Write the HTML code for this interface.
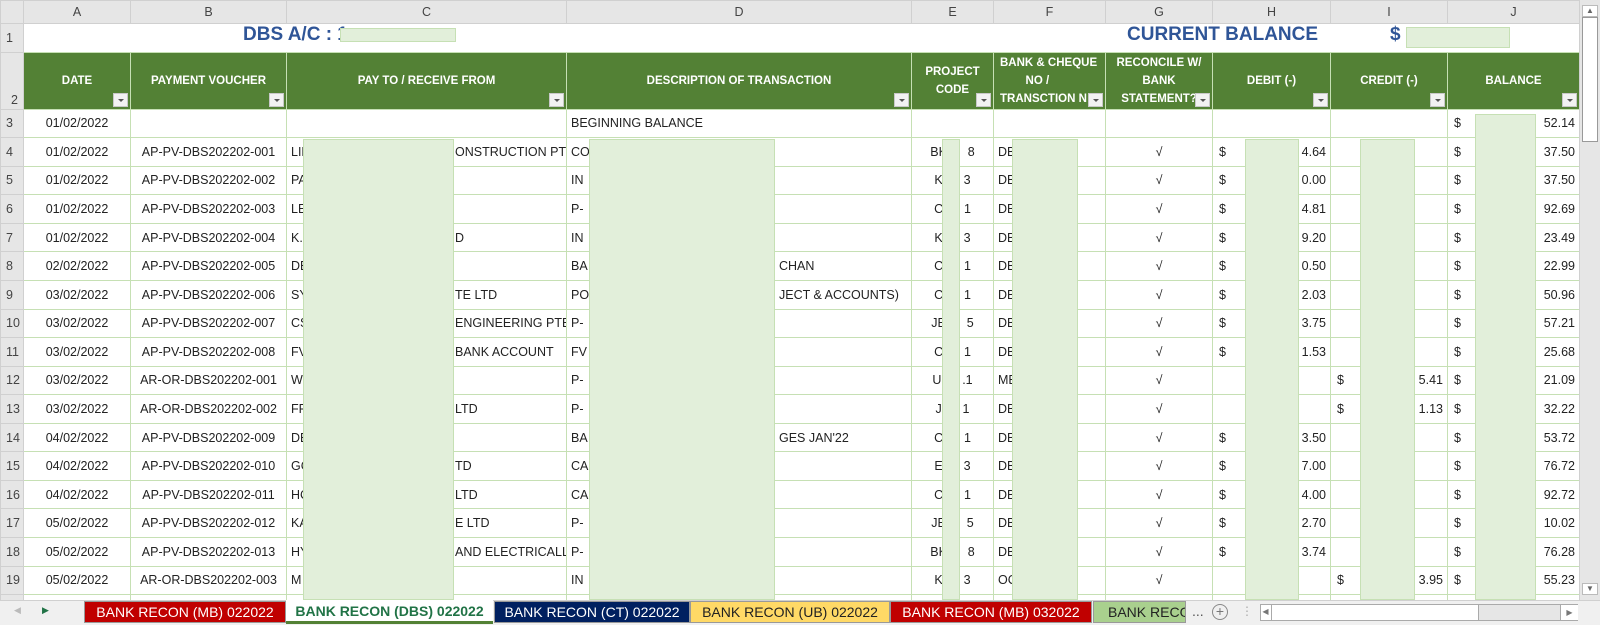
<!DOCTYPE html>
<html><head><meta charset="utf-8">
<style>
*{margin:0;padding:0;box-sizing:border-box}
body{width:1600px;height:625px;overflow:hidden;background:#fff;font-family:"Liberation Sans",sans-serif;position:relative}
table{position:absolute;left:0;top:0;border-collapse:collapse;table-layout:fixed}
td{border:1px solid #c6e0b4;font-size:12.5px;color:#222;white-space:nowrap;overflow:hidden;padding:0 4px;height:28.57px;vertical-align:middle;position:relative}
tr.cl td{background:#e6e6e6;border:1px solid #d0d0d0;color:#444;text-align:center;height:23px;font-size:12.5px}
td.rh{background:#e6e6e6;border:1px solid #d0d0d0;color:#444;padding:0 0 0 5px;text-align:left}
tr.hd td{background:#538135;color:#fff;font-weight:bold;font-size:11.5px;text-align:center;height:57px;line-height:18px;border:1px solid #c6e0b4}
tr.hd td.rh{background:#e6e6e6;color:#444;font-weight:normal;vertical-align:bottom;font-size:12.5px;border:1px solid #d0d0d0}
.fb{position:absolute;right:2px;bottom:2px;width:15px;height:14px;background:#f2f2f2;border:1px solid #c8c8c8}
.fb:after{content:"";position:absolute;left:4px;top:5px;border-left:3px solid transparent;border-right:3px solid transparent;border-top:3px solid #555}
.c{text-align:center}
.r{text-align:right}
.d{position:absolute;left:6px;top:50%;transform:translateY(-50%)}
.x{position:absolute;top:50%;transform:translateY(-50%)}
.red{position:absolute;background:#e2efda;border:1px solid #c6e0b4}
</style></head><body>
<table>
<colgroup><col style="width:23px"><col style="width:107px"><col style="width:156px"><col style="width:280px"><col style="width:345px"><col style="width:82px"><col style="width:112px"><col style="width:107px"><col style="width:118px"><col style="width:117px"><col style="width:132px"></colgroup>
<tr class="cl"><td style="background:#e6e6e6"></td><td>A</td><td>B</td><td>C</td><td>D</td><td>E</td><td>F</td><td>G</td><td>H</td><td>I</td><td>J</td></tr>
<tr style="height:28px"><td class="rh">1</td><td colspan="10" style="border:none;border-bottom:1px solid #c6e0b4;height:28px"></td></tr>
<tr class="hd"><td class="rh">2</td>
<td>DATE<div class="fb"></div></td>
<td>PAYMENT VOUCHER<div class="fb"></div></td>
<td>PAY TO / RECEIVE FROM<div class="fb"></div></td>
<td>DESCRIPTION OF TRANSACTION<div class="fb"></div></td>
<td>PROJECT<br>CODE<div class="fb"></div></td>
<td style="vertical-align:top;padding-top:1px;text-align:left;padding-left:6px">BANK &amp; CHEQUE<br>&nbsp;&nbsp;&nbsp;&nbsp;&nbsp;&nbsp;&nbsp;&nbsp;NO /<br>TRANSCTION N<div class="fb"></div></td>
<td style="vertical-align:top;padding-top:1px">RECONCILE W/<br>BANK<br>STATEMENT?<div class="fb"></div></td>
<td>DEBIT (-)<div class="fb"></div></td>
<td>CREDIT (-)<div class="fb"></div></td>
<td>BALANCE<div class="fb"></div></td></tr>
<tr><td class="rh">3</td><td class="c">01/02/2022</td><td></td><td></td><td>BEGINNING BALANCE</td><td></td><td></td><td></td><td></td><td></td><td class="r"><span class="d">$</span>52.14</td></tr>
<tr><td class="rh">4</td><td class="c">01/02/2022</td><td class="c">AP-PV-DBS202202-001</td><td>LIN<span class="x" style="left:168px">ONSTRUCTION PTE L</span></td><td>CO</td><td class="c">BK&nbsp;&nbsp;&nbsp;&nbsp;&nbsp;&nbsp;8</td><td>DB</td><td class="c">√</td><td class="r"><span class="d">$</span>4.64</td><td></td><td class="r"><span class="d">$</span>37.50</td></tr>
<tr><td class="rh">5</td><td class="c">01/02/2022</td><td class="c">AP-PV-DBS202202-002</td><td>PA</td><td>IN</td><td class="c">K&nbsp;&nbsp;&nbsp;&nbsp;&nbsp;&nbsp;3</td><td>DB</td><td class="c">√</td><td class="r"><span class="d">$</span>0.00</td><td></td><td class="r"><span class="d">$</span>37.50</td></tr>
<tr><td class="rh">6</td><td class="c">01/02/2022</td><td class="c">AP-PV-DBS202202-003</td><td>LE</td><td>P-</td><td class="c">C&nbsp;&nbsp;&nbsp;&nbsp;&nbsp;&nbsp;1</td><td>DB</td><td class="c">√</td><td class="r"><span class="d">$</span>4.81</td><td></td><td class="r"><span class="d">$</span>92.69</td></tr>
<tr><td class="rh">7</td><td class="c">01/02/2022</td><td class="c">AP-PV-DBS202202-004</td><td>K.I<span class="x" style="left:168px">D</span></td><td>IN</td><td class="c">K&nbsp;&nbsp;&nbsp;&nbsp;&nbsp;&nbsp;3</td><td>DB</td><td class="c">√</td><td class="r"><span class="d">$</span>9.20</td><td></td><td class="r"><span class="d">$</span>23.49</td></tr>
<tr><td class="rh">8</td><td class="c">02/02/2022</td><td class="c">AP-PV-DBS202202-005</td><td>DE</td><td>BA<span class="x" style="left:212px">CHAN</span></td><td class="c">C&nbsp;&nbsp;&nbsp;&nbsp;&nbsp;&nbsp;1</td><td>DB</td><td class="c">√</td><td class="r"><span class="d">$</span>0.50</td><td></td><td class="r"><span class="d">$</span>22.99</td></tr>
<tr><td class="rh">9</td><td class="c">03/02/2022</td><td class="c">AP-PV-DBS202202-006</td><td>SY<span class="x" style="left:168px">TE LTD</span></td><td>PO<span class="x" style="left:212px">JECT &amp; ACCOUNTS)</span></td><td class="c">C&nbsp;&nbsp;&nbsp;&nbsp;&nbsp;&nbsp;1</td><td>DB</td><td class="c">√</td><td class="r"><span class="d">$</span>2.03</td><td></td><td class="r"><span class="d">$</span>50.96</td></tr>
<tr><td class="rh">10</td><td class="c">03/02/2022</td><td class="c">AP-PV-DBS202202-007</td><td>CS<span class="x" style="left:168px">ENGINEERING PTE L</span></td><td>P-</td><td class="c">JE&nbsp;&nbsp;&nbsp;&nbsp;&nbsp;&nbsp;5</td><td>DB</td><td class="c">√</td><td class="r"><span class="d">$</span>3.75</td><td></td><td class="r"><span class="d">$</span>57.21</td></tr>
<tr><td class="rh">11</td><td class="c">03/02/2022</td><td class="c">AP-PV-DBS202202-008</td><td>FV<span class="x" style="left:168px">BANK ACCOUNT</span></td><td>FV</td><td class="c">C&nbsp;&nbsp;&nbsp;&nbsp;&nbsp;&nbsp;1</td><td>DB</td><td class="c">√</td><td class="r"><span class="d">$</span>1.53</td><td></td><td class="r"><span class="d">$</span>25.68</td></tr>
<tr><td class="rh">12</td><td class="c">03/02/2022</td><td class="c">AR-OR-DBS202202-001</td><td>W</td><td>P-</td><td class="c">U&nbsp;&nbsp;&nbsp;&nbsp;&nbsp;&nbsp;.1</td><td>ME</td><td class="c">√</td><td></td><td class="r"><span class="d">$</span>5.41</td><td class="r"><span class="d">$</span>21.09</td></tr>
<tr><td class="rh">13</td><td class="c">03/02/2022</td><td class="c">AR-OR-DBS202202-002</td><td>FR<span class="x" style="left:168px">LTD</span></td><td>P-</td><td class="c">J&nbsp;&nbsp;&nbsp;&nbsp;&nbsp;&nbsp;1</td><td>DB</td><td class="c">√</td><td></td><td class="r"><span class="d">$</span>1.13</td><td class="r"><span class="d">$</span>32.22</td></tr>
<tr><td class="rh">14</td><td class="c">04/02/2022</td><td class="c">AP-PV-DBS202202-009</td><td>DE</td><td>BA<span class="x" style="left:212px">GES JAN'22</span></td><td class="c">C&nbsp;&nbsp;&nbsp;&nbsp;&nbsp;&nbsp;1</td><td>DB</td><td class="c">√</td><td class="r"><span class="d">$</span>3.50</td><td></td><td class="r"><span class="d">$</span>53.72</td></tr>
<tr><td class="rh">15</td><td class="c">04/02/2022</td><td class="c">AP-PV-DBS202202-010</td><td>GC<span class="x" style="left:168px">TD</span></td><td>CA</td><td class="c">E&nbsp;&nbsp;&nbsp;&nbsp;&nbsp;&nbsp;3</td><td>DB</td><td class="c">√</td><td class="r"><span class="d">$</span>7.00</td><td></td><td class="r"><span class="d">$</span>76.72</td></tr>
<tr><td class="rh">16</td><td class="c">04/02/2022</td><td class="c">AP-PV-DBS202202-011</td><td>HC<span class="x" style="left:168px">LTD</span></td><td>CA</td><td class="c">C&nbsp;&nbsp;&nbsp;&nbsp;&nbsp;&nbsp;1</td><td>DB</td><td class="c">√</td><td class="r"><span class="d">$</span>4.00</td><td></td><td class="r"><span class="d">$</span>92.72</td></tr>
<tr><td class="rh">17</td><td class="c">05/02/2022</td><td class="c">AP-PV-DBS202202-012</td><td>KA<span class="x" style="left:168px">E LTD</span></td><td>P-</td><td class="c">JE&nbsp;&nbsp;&nbsp;&nbsp;&nbsp;&nbsp;5</td><td>DB</td><td class="c">√</td><td class="r"><span class="d">$</span>2.70</td><td></td><td class="r"><span class="d">$</span>10.02</td></tr>
<tr><td class="rh">18</td><td class="c">05/02/2022</td><td class="c">AP-PV-DBS202202-013</td><td>HY<span class="x" style="left:168px">AND ELECTRICALLY S</span></td><td>P-</td><td class="c">BK&nbsp;&nbsp;&nbsp;&nbsp;&nbsp;&nbsp;8</td><td>DB</td><td class="c">√</td><td class="r"><span class="d">$</span>3.74</td><td></td><td class="r"><span class="d">$</span>76.28</td></tr>
<tr><td class="rh">19</td><td class="c">05/02/2022</td><td class="c">AR-OR-DBS202202-003</td><td>M</td><td>IN</td><td class="c">K&nbsp;&nbsp;&nbsp;&nbsp;&nbsp;&nbsp;3</td><td>OC</td><td class="c">√</td><td></td><td class="r"><span class="d">$</span>3.95</td><td class="r"><span class="d">$</span>55.23</td></tr>
<tr><td class="rh"></td><td></td><td></td><td></td><td></td><td></td><td></td><td></td><td></td><td></td><td></td></tr>
</table>

<div style="position:absolute;left:243px;top:24px;font-size:19px;font-weight:bold;color:#2f5597">DBS A/C : 1</div>
<div class="red" style="left:340px;top:28px;width:116px;height:14px"></div>
<div style="position:absolute;left:1127px;top:24px;font-size:19px;font-weight:bold;color:#2f5597">CURRENT BALANCE</div>
<div style="position:absolute;left:1390px;top:24px;font-size:19px;font-weight:bold;color:#2f5597">$</div>
<div class="red" style="left:1406px;top:27px;width:104px;height:21px"></div>

<div class="red" style="left:303px;top:139px;width:151px;height:461px"></div>
<div class="red" style="left:589px;top:139px;width:186px;height:461px"></div>
<div class="red" style="left:942px;top:139px;width:18px;height:461px"></div>
<div class="red" style="left:1012px;top:139px;width:66px;height:461px"></div>
<div class="red" style="left:1245px;top:139px;width:54px;height:461px"></div>
<div class="red" style="left:1360px;top:139px;width:55px;height:461px"></div>
<div class="red" style="left:1475px;top:114px;width:61px;height:486px"></div>

<div style="position:absolute;left:1579px;top:0;width:21px;height:600px;background:#e6e6e6;border-left:1px solid #d0d0d0"></div>
<div style="position:absolute;left:1582px;top:5px;width:16px;height:12px;background:#fff;border:1px solid #bbb;font-size:8px;color:#666;text-align:center;line-height:10px">▲</div>
<div style="position:absolute;left:1582px;top:17px;width:16px;height:125px;background:#fff;border:1px solid #999"></div>
<div style="position:absolute;left:1582px;top:583px;width:16px;height:12px;background:#fff;border:1px solid #bbb;font-size:8px;color:#666;text-align:center;line-height:10px">▼</div>

<div style="position:absolute;left:0;top:600px;width:1600px;height:25px;background:#f0f0f0;border-top:1px solid #d0d0d0"></div>
<div style="position:absolute;left:14px;top:605px;font-size:9px;color:#bbb">◀</div>
<div style="position:absolute;left:42px;top:605px;font-size:9px;color:#217346">▶</div>
<div style="position:absolute;top:601px;height:22px;font-size:14px;line-height:21px;text-align:center;white-space:nowrap;overflow:hidden;left:84px;width:202px;background:#c00000;color:#fff;border:1px solid #999">BANK RECON (MB) 022022</div>
<div style="position:absolute;top:600px;height:24px;font-size:14px;line-height:22px;text-align:center;left:286px;width:207px;background:#fff;color:#217346;font-weight:bold;border-bottom:3px solid #538135">BANK RECON (DBS) 022022</div>
<div style="position:absolute;top:601px;height:22px;font-size:14px;line-height:21px;text-align:center;left:494px;width:196px;background:#002060;color:#fff;border:1px solid #999">BANK RECON (CT) 022022</div>
<div style="position:absolute;top:601px;height:22px;font-size:14px;line-height:21px;text-align:center;left:690px;width:200px;background:#ffd966;color:#222;border:1px solid #999">BANK RECON (UB) 022022</div>
<div style="position:absolute;top:601px;height:22px;font-size:14px;line-height:21px;text-align:center;left:890px;width:202px;background:#c00000;color:#fff;border:1px solid #999">BANK RECON (MB) 032022</div>
<div style="position:absolute;top:601px;height:22px;font-size:14px;line-height:21px;text-align:left;padding-left:14px;overflow:hidden;white-space:nowrap;left:1093px;width:93px;background:#a9d08e;color:#222;border:1px solid #999">BANK RECO</div>
<div style="position:absolute;left:1192px;top:603px;font-size:14px;color:#555">...</div>
<div style="position:absolute;left:1212px;top:604px;width:16px;height:16px;border:1px solid #888;border-radius:50%;font-size:14px;line-height:13px;text-align:center;color:#777">+</div>
<div style="position:absolute;left:1241px;top:604px;font-size:12px;color:#aaa">⋮</div>
<div style="position:absolute;left:1260px;top:604px;width:318px;height:17px;background:#fff;border:1px solid #aaa"></div>
<div style="position:absolute;left:1260px;top:604px;width:12px;height:17px;border-right:1px solid #aaa;font-size:8px;color:#777;text-align:center;line-height:16px">◀</div>
<div style="position:absolute;left:1478px;top:604px;width:100px;height:17px;background:#e6e6e6;border:1px solid #aaa"></div>
<div style="position:absolute;left:1560px;top:605px;width:18px;height:15px;background:#fff;border-left:1px solid #aaa;font-size:8px;color:#777;text-align:center;line-height:15px">▶</div>
</body></html>
